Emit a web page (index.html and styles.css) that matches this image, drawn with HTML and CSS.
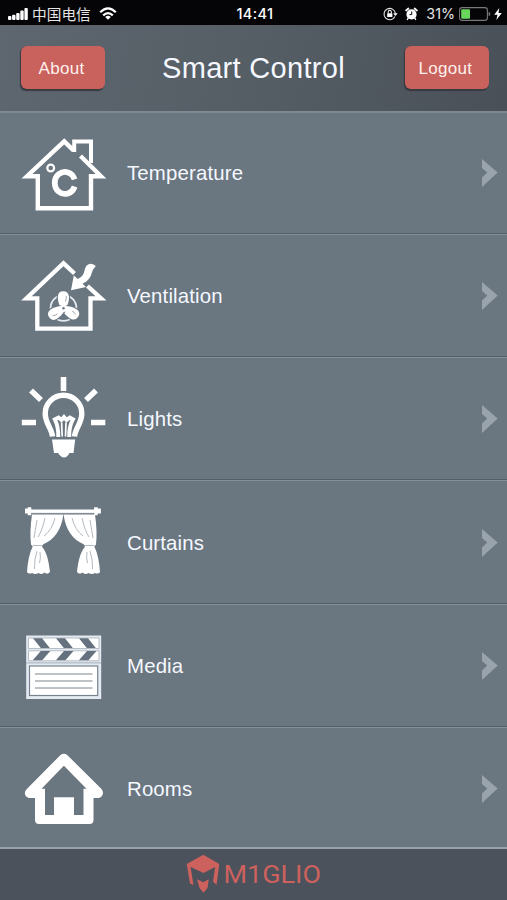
FILE: index.html
```html
<!DOCTYPE html>
<html lang="en">
<head>
<meta charset="utf-8">
<title>Smart Control</title>
<link rel="stylesheet" href="styles.css">
</head>
<body>
<div class="app">
  <div class="status">
    <div class="status-left">
      <svg class="signal" width="20" height="12" viewBox="0 0 20 12" fill="#fff"><rect x="0" y="8" width="3.4" height="4" rx="1"/><rect x="4.1" y="6.8" width="3.4" height="5.2" rx="1"/><rect x="8.2" y="5" width="3.4" height="7" rx="1"/><rect x="12.3" y="2.5" width="3.4" height="9.5" rx="1"/><rect x="16.4" y="0" width="3.4" height="12" rx="1"/></svg>
      <span class="carrier">中国电信</span>
      <svg class="wifi" width="18" height="13" viewBox="0 0 18 13" fill="none" stroke="#fff" stroke-width="2.2"><path d="M1.2 5.2Q9-2.6 16.8 5.2"/><path d="M4.2 8.4Q9 3.8 13.8 8.4"/><path d="M6.2 9.9Q9 7.4 11.8 9.9L9 12.8Z" fill="#fff" stroke="none"/></svg>
    </div>
    <span class="clock">14:41</span>
    <div class="status-right">
      <svg class="lock" width="15" height="14" viewBox="0 0 15 14" fill="none" stroke="#e4e4e4" stroke-width="1.1"><path d="M11.9 9.5A5.7 5.7 0 1 1 12.4 6.5"/><path d="M10.2 6.2h4.5l-2.3 2.9z" fill="#fff" stroke="none"/><path d="M5.2 6.5V5a1.6 1.6 0 0 1 3.2 0v1.5"/><rect x="4.2" y="6.2" width="5.2" height="3.8" rx=".5" fill="#fff" stroke="none"/></svg>
      <svg class="alarm" width="13" height="14" viewBox="0 0 13 14"><circle cx="6.5" cy="7.4" r="5.1" fill="#fff"/><path d="M1.1 3.5L3.4 1.5M11.9 3.5L9.6 1.5" stroke="#fff" stroke-width="1.7" stroke-linecap="round"/><path d="M3.2 11.2L2.4 12.4M9.8 11.2L10.6 12.4" stroke="#fff" stroke-width="1.4" stroke-linecap="round"/><path d="M6.7 4.4V7.6H4.5" fill="none" stroke="#050507" stroke-width="1"/></svg>
      <span class="percent">31%</span>
      <svg class="battery" width="32" height="14" viewBox="0 0 32 14"><rect x=".6" y=".6" width="27.8" height="12.8" rx="2.6" fill="none" stroke="#77797b" stroke-width="1.1"/><rect x="2.2" y="2.2" width="8.8" height="9.6" rx="1" fill="#68d75c"/><path d="M29.6 4.7q1.7.5 1.7 2.3t-1.7 2.3z" fill="#77797b"/></svg>
      <svg class="bolt" width="8" height="12" viewBox="0 0 8 12"><path d="M5.3 0L.2 6.7h3.3L2.3 12 7.8 4.9H4.5z" fill="#fff"/></svg>
    </div>
  </div>

  <header class="header">
    <button class="button">About</button>
    <h1 class="title">Smart Control</h1>
    <button class="button">Logout</button>
  </header>

  <main class="menu">
    <a class="row">
      <svg class="icon" viewBox="10 125 110 100" width="110" height="100" fill="none" stroke="#fff" stroke-width="4.4">
        <path d="M73.5 150.3L64.2 141.3 27 176.2H37.8V208.2H91V176.2H101L80.5 156"/>
        <path d="M74.2 152V141.5H91V163" stroke-width="4"/>
        <circle cx="50.7" cy="168" r="3.4" stroke-width="2.2"/>
        <path d="M74.6 179.3A10.2 11 0 1 0 74.6 186.5" stroke-width="5.8"/>
      </svg>
      <span class="label">Temperature</span>
      <svg class="chevron" width="16" height="28" viewBox="0 0 16 28"><path d="M0 0L15.7 13.6 0 28V18.5L5.2 13.6 0 9Z"/></svg>
    </a>
    <a class="row">
      <svg class="icon" viewBox="10 248.5 110 100" width="110" height="100" fill="none" stroke="#fff" stroke-width="4.3">
        <path d="M74.5 274L63.5 263.8 26.5 298.8H37.3V329.2H90.5V298.8H101L87.5 286.5"/>
        <path d="M95.8 266.4Q90.5 262.5 87 265.8C84.2 268.5 84.8 273.5 82.3 276.3Q80.5 278.2 77.8 279.5L73.8 276 71 290.8 86 287.5 82.6 284.2C86.8 282 90.3 279 91.2 275Q91.8 270.5 95.8 266.4Z" fill="#fff" stroke="none"/>
        <circle cx="63.5" cy="308.5" r="12.9" stroke="#e3e9ef" stroke-width="1.9"/>
        <g fill="#fff" stroke="#6a7680" stroke-width="2.2" paint-order="stroke">
          <path d="M61 309C58.8 305 57.6 301 57.8 297Q58.2 291.8 63.2 291.8T69 297C69.2 301 68 305 66 309Z"/>
          <path d="M61 309C58.8 305 57.6 301 57.8 297Q58.2 291.8 63.2 291.8T69 297C69.2 301 68 305 66 309Z" transform="rotate(120 63.5 308.8)"/>
          <path d="M61 309C58.8 305 57.6 301 57.8 297Q58.2 291.8 63.2 291.8T69 297C69.2 301 68 305 66 309Z" transform="rotate(240 63.5 308.8)"/>
        </g>
        <circle cx="63.5" cy="308.8" r="3.8" fill="#fff" stroke="none"/><circle cx="63.5" cy="308.8" r="1.2" fill="#6a7680" stroke="none"/>
        <path d="M66.3 296.5Q66.5 299 65.3 302M52.5 316Q55 316.5 57.5 314.3M72 311.5Q74.5 312.5 75.5 315" stroke="#8d969e" stroke-width=".8"/>
      </svg>
      <span class="label">Ventilation</span>
      <svg class="chevron" width="16" height="28" viewBox="0 0 16 28"><path d="M0 0L15.7 13.6 0 28V18.5L5.2 13.6 0 9Z"/></svg>
    </a>
    <a class="row">
      <svg class="icon" viewBox="10 371.5 110 100" width="110" height="100" fill="none" stroke="#fff" stroke-width="5.6">
        <path d="M63.5 377.5V391.5M31 391L41 400.5M96 391L86 400.5M21.8 423H36M91 423H105.3"/>
        <path d="M52.5 437C51.8 428.5 45.2 424 45.2 414A18.3 18.3 0 0 1 81.8 414C81.8 424 75.2 428.5 74.5 437" stroke-width="5.4"/>
        <path d="M58.3 437.5Q58.5 427 54.8 419.8L58.5 418 61.5 420.5 64 417.5 66.5 420.5 69.8 418 73 419.8Q69 427 69.2 437.5" stroke-width="3.9"/>
        <path d="M62.2 437L61.6 423M65.5 437L66 423" stroke-width="1.7"/>
        <path d="M52 440H75.2L73.5 453.5H69.5Q64.5 462.5 58 453.5H54Z" fill="#fff" stroke="none"/>
      </svg>
      <span class="label">Lights</span>
      <svg class="chevron" width="16" height="28" viewBox="0 0 16 28"><path d="M0 0L15.7 13.6 0 28V18.5L5.2 13.6 0 9Z"/></svg>
    </a>
    <a class="row">
      <svg class="icon" viewBox="10 495 110 100" width="110" height="100" fill="#fff">
        <path d="M25 508.5h2.7v-1.2h3.6v2.2h62.8v-2.2h3.6v1.2h3.2v5h-3.2v1.8h-3.6v-2H31.3v2h-3.6v-1.8H25z"/>
        <g>
          <path d="M32 514.5H63.4C61.5 530 54 540 43.3 544.2L42 546.8C47.5 553 49 564 50 572Q47.2 575 44.6 572.5 42 575 38.5 573 35 575 32 573 29 574.5 27 572.2 28 556 32.7 546.5L31 544.5Q29.5 532 32 514.5Z"/>
          <path d="M37 520Q35 532 34 538M45 518Q42 531 38 537M55 518Q52 530 44 536M37 551Q34 560 34.5 569M40 552Q41 558 39.5 563M32.8 545.5H43" fill="none" stroke="#a9b1b8" stroke-width=".9"/>
        </g>
        <g transform="translate(127 0) scale(-1 1)">
          <path d="M32 514.5H63.4C61.5 530 54 540 43.3 544.2L42 546.8C47.5 553 49 564 50 572Q47.2 575 44.6 572.5 42 575 38.5 573 35 575 32 573 29 574.5 27 572.2 28 556 32.7 546.5L31 544.5Q29.5 532 32 514.5Z"/>
          <path d="M37 520Q35 532 34 538M45 518Q42 531 38 537M55 518Q52 530 44 536M37 551Q34 560 34.5 569M40 552Q41 558 39.5 563M32.8 545.5H43" fill="none" stroke="#a9b1b8" stroke-width=".9"/>
        </g>
        <path d="M31 513.4H94.5" stroke="#7f8992" stroke-width=".9"/>
      </svg>
      <span class="label">Curtains</span>
      <svg class="chevron" width="16" height="28" viewBox="0 0 16 28"><path d="M0 0L15.7 13.6 0 28V18.5L5.2 13.6 0 9Z"/></svg>
    </a>
    <a class="row">
      <svg class="icon" viewBox="10 617.5 110 100" width="110" height="100" fill="none">
        <rect x="26.2" y="635" width="75" height="63.5" fill="#e4eaf2"/>
        <path d="M28.5 637.5H99V648H28.5ZM28.5 650.3H99V660.3H28.5Z" fill="#fff" stroke="#9da6af" stroke-width=".7"/>
        <g fill="#65717e"><path d="M33 637.8h9l7.8 9.6h-9zM56 637.8h9l7.8 9.6h-9zM79 637.8h9l7.8 9.6h-9zM40.8 650.4h9.5l-8.1 9.4h-9.5zM64 650.4h9.5l-8.1 9.4h-9.5zM87 650.4h9.5l-8.1 9.4h-9.5z"/></g>
        <path d="M26.5 662.4H101" stroke="#a4adb7" stroke-width="1"/>
        <rect x="29.5" y="665.5" width="68.2" height="29.5" fill="#fff" stroke="#77838f" stroke-width="1.2"/>
        <path d="M35 673.5H92.5M35 680.5H92.5M35 687.5H92.5" stroke="#7d858d" stroke-width="1.2"/>
      </svg>
      <span class="label">Media</span>
      <svg class="chevron" width="16" height="28" viewBox="0 0 16 28"><path d="M0 0L15.7 13.6 0 28V18.5L5.2 13.6 0 9Z"/></svg>
    </a>
    <a class="row">
      <svg class="icon" viewBox="10 741 110 100" width="110" height="100">
        <path d="M60.5 755Q64 752.4 67.2 755L101.5 789Q104.5 793 101.5 796.5 100 798 97.5 798H93.5V820Q93.5 824 89.5 824H39Q35 824 35 820V798H29Q25 797 24.8 792.8 25 791 26.8 789ZM63.9 765.8L41.5 788.8H45V815H54V797.2H74V815H83.5V788.8H86.5Z" fill="#fff" fill-rule="evenodd"/>
      </svg>
      <span class="label">Rooms</span>
      <svg class="chevron" width="16" height="28" viewBox="0 0 16 28"><path d="M0 0L15.7 13.6 0 28V18.5L5.2 13.6 0 9Z"/></svg>
    </a>
  </main>

  <footer class="footer">
    <svg width="135" height="40" viewBox="186 854 135 40" fill="#cd615e">
      <path d="M203.3 854.8L219.3 864 216.5 885 213 881.5 215.2 867 203.5 873 190.6 867 193.5 885 190 883.5 186.7 864Z"/>
      <path d="M197 879.3L203.3 882.2 208.8 879.3 207.5 888 203.5 892.8 199.5 888Z"/>
      <text class="wordmark" x="223.5" y="883" textLength="97.5" lengthAdjust="spacingAndGlyphs">M1GLIO</text>
    </svg>
  </footer>
</div>
</body>
</html>
```

FILE: styles.css
```css
* { box-sizing: border-box; }

body {
  margin: 0;
  background: #6a7680;
  font-family: "Liberation Sans", Arial, sans-serif;
  color: #f5f8ff;
}

.app {
  width: 507px;
  height: 900px;
  display: flex;
  flex-direction: column;
  overflow: hidden;
}

.status {
  height: 25px;
  flex: none;
  display: grid;
  grid-template-columns: 1fr auto 1fr;
  align-items: center;
  padding: 2px 5px 0 8px;
  background: #050507;
  color: #fff;
}

.status-left, .status-right { display: flex; align-items: center; }
.status-right { justify-content: flex-end; }

.carrier {
  margin-left: 4px;
  font: 14.7px/20px "Noto Sans CJK SC", sans-serif;
  color: #e4e4e4;
}

.wifi { margin-left: 8px; }

.clock {
  font: 500 14.5px/20px Inter, sans-serif;
  letter-spacing: 0.4px;
}

.alarm { margin-left: 7px; }
.percent { margin: 0 4px 0 8px; font: 14.3px/20px Inter, sans-serif; color: #e4e4e4; }
.bolt { margin-left: 3px; }

.header {
  height: 85.5px;
  flex: none;
  display: flex;
  align-items: flex-start;
  justify-content: space-between;
  padding: 21px 18px 0 21px;
  background: linear-gradient(100deg, #5e666f, #555d65 50%, #495058);
}

.button {
  width: 84px;
  height: 43px;
  padding: 2px 3px 0 0;
  border: 0;
  border-radius: 6px;
  background: #c9615d;
  box-shadow: -1px 1.5px 1px #383a40;
  font: 17px "Liberation Sans", Arial, sans-serif;
  letter-spacing: 0.3px;
  color: #fff0ec;
}

.title {
  margin: 4px 3px 0 0;
  font-size: 29px;
  line-height: 36px;
  font-weight: 400;
  letter-spacing: 0.3px;
  white-space: nowrap;
}

.menu {
  height: 736.5px;
  flex: none;
  overflow: hidden;
}

.row {
  height: 123.3px;
  display: flex;
  align-items: center;
  padding: 1px 9px 0 10px;
  border-top: 1.5px solid #84919b;
  border-bottom: 1px solid #525f69;
  background: #6a7680;
}

.row:first-child { border-top: 2px solid #7e8993; }
.icon { flex: none; margin-top: 4px; }
.label { flex: 1; margin-left: 7px; font-size: 20.4px; line-height: 26px; letter-spacing: 0.15px; }
.chevron { fill: #99a3ac; }

.footer {
  height: 53px;
  flex: none;
  display: flex;
  justify-content: center;
  padding-top: 5px;
  border-top: 2px solid #98a2ab;
  background: #4b525b;
}

.wordmark { font: 26.5px Roboto, sans-serif; }
```
